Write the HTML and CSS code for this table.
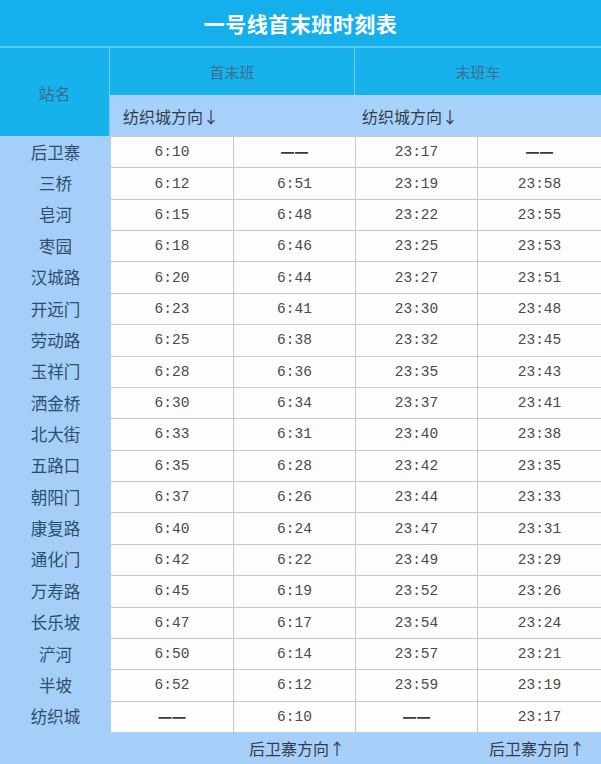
FILE: index.html
```html
<!DOCTYPE html>
<html lang="zh">
<head>
<meta charset="utf-8">
<title>一号线首末班时刻表</title>
<link rel="stylesheet" href="styles.css">
</head>
<body>
<div class="page">
  <div class="title">一号线首末班时刻表</div>
  <div class="head">
    <div class="h-station">站名</div>
    <div class="h-group">首末班</div>
    <div class="h-group">末班车</div>
    <div class="h-dir first">纺织城方向↓</div>
    <div class="h-dir second">纺织城方向↓</div>
  </div>
  <div class="grid">
    <div class="st">后卫寨</div><div class="c">6:10</div><div class="c dash">一一</div><div class="c">23:17</div><div class="c dash">一一</div>
    <div class="st">三桥</div><div class="c">6:12</div><div class="c">6:51</div><div class="c">23:19</div><div class="c">23:58</div>
    <div class="st">皂河</div><div class="c">6:15</div><div class="c">6:48</div><div class="c">23:22</div><div class="c">23:55</div>
    <div class="st">枣园</div><div class="c">6:18</div><div class="c">6:46</div><div class="c">23:25</div><div class="c">23:53</div>
    <div class="st">汉城路</div><div class="c">6:20</div><div class="c">6:44</div><div class="c">23:27</div><div class="c">23:51</div>
    <div class="st">开远门</div><div class="c">6:23</div><div class="c">6:41</div><div class="c">23:30</div><div class="c">23:48</div>
    <div class="st">劳动路</div><div class="c">6:25</div><div class="c">6:38</div><div class="c">23:32</div><div class="c">23:45</div>
    <div class="st">玉祥门</div><div class="c">6:28</div><div class="c">6:36</div><div class="c">23:35</div><div class="c">23:43</div>
    <div class="st">洒金桥</div><div class="c">6:30</div><div class="c">6:34</div><div class="c">23:37</div><div class="c">23:41</div>
    <div class="st">北大街</div><div class="c">6:33</div><div class="c">6:31</div><div class="c">23:40</div><div class="c">23:38</div>
    <div class="st">五路口</div><div class="c">6:35</div><div class="c">6:28</div><div class="c">23:42</div><div class="c">23:35</div>
    <div class="st">朝阳门</div><div class="c">6:37</div><div class="c">6:26</div><div class="c">23:44</div><div class="c">23:33</div>
    <div class="st">康复路</div><div class="c">6:40</div><div class="c">6:24</div><div class="c">23:47</div><div class="c">23:31</div>
    <div class="st">通化门</div><div class="c">6:42</div><div class="c">6:22</div><div class="c">23:49</div><div class="c">23:29</div>
    <div class="st">万寿路</div><div class="c">6:45</div><div class="c">6:19</div><div class="c">23:52</div><div class="c">23:26</div>
    <div class="st">长乐坡</div><div class="c">6:47</div><div class="c">6:17</div><div class="c">23:54</div><div class="c">23:24</div>
    <div class="st">浐河</div><div class="c">6:50</div><div class="c">6:14</div><div class="c">23:57</div><div class="c">23:21</div>
    <div class="st">半坡</div><div class="c">6:52</div><div class="c">6:12</div><div class="c">23:59</div><div class="c">23:19</div>
    <div class="st">纺织城</div><div class="c dash">一一</div><div class="c">6:10</div><div class="c dash">一一</div><div class="c">23:17</div>
  </div>
  <div class="foot">
    <div class="f-station"></div>
    <div class="f-dir">后卫寨方向↑</div>
    <div class="f-dir">后卫寨方向↑</div>
  </div>
</div>
</body>
</html>
```
FILE: styles.css
```css
html, body {
  margin: 0;
  padding: 0;
  background: #a6d0f9;
}
.page {
  width: 601px;
  height: 764px;
  overflow: hidden;
  font-family: "Noto Sans CJK SC", "Noto Sans", sans-serif;
  background: #a6d0f9;
}
.title {
  height: 46px;
  background: #15b0ec;
  color: #ffffff;
  font-weight: bold;
  font-size: 21px;
  line-height: 46px;
  text-align: center;
  letter-spacing: 0.5px;
  border-bottom: 2px solid #5ccaf2;
}
.head {
  display: grid;
  grid-template-columns: 110px 245px 246px;
  grid-template-rows: 47px 41px;
  background: #17b1ec;
}
.h-station {
  grid-row: 1 / 3;
  display: flex;
  align-items: center;
  justify-content: center;
  color: #3d6b8c;
  font-size: 16px;
  border-right: 1px solid #6fd0f4;
  padding-top: 2px;
}
.h-group {
  display: flex;
  align-items: center;
  justify-content: center;
  color: #3f6e8e;
  font-size: 15px;
  border-right: 1px solid #6fd0f4;
}
.h-group:nth-child(3) { border-right: none; }
.h-dir {
  background: #a9d2fb;
  display: flex;
  align-items: center;
  color: #333c48;
  font-size: 16px;
}
.h-dir.first { padding-left: 13px; background: #a7d0fa; }
.h-dir.second { padding-left: 7px; }
.grid {
  display: grid;
  grid-template-columns: 111px 122px 122px 122px 124px;
  grid-template-rows: repeat(19, 1fr);
  height: 596px;
  background: #a6d0f9;
}
.st {
  display: flex;
  align-items: center;
  justify-content: center;
  color: #2f4d6e;
  font-size: 16.5px;
  background: #a5cff8;
}
.c {
  display: flex;
  align-items: center;
  justify-content: center;
  background: #fdfdfd;
  color: #4a4a4a;
  font-family: "Liberation Mono", "DejaVu Sans Mono", monospace;
  font-size: 14.5px;
  border-top: 1px solid #c8c8c8;
  border-left: 1px solid #c8c8c8;
}
.st + .c { border-left: none; }
.c.dash {
  font-family: "Noto Sans CJK SC", sans-serif;
  font-size: 14px;
  font-weight: bold;
  letter-spacing: 0;
  color: #3a3a3a;
}
.foot {
  display: grid;
  grid-template-columns: 111px 244px 246px;
  height: 32px;
  background: #a6d0f9;
}
.f-dir {
  display: flex;
  align-items: center;
  justify-content: flex-end;
  color: #333c48;
  font-size: 16px;
  padding-right: 10px;
}
.f-dir:last-child { padding-right: 16px; }
```
